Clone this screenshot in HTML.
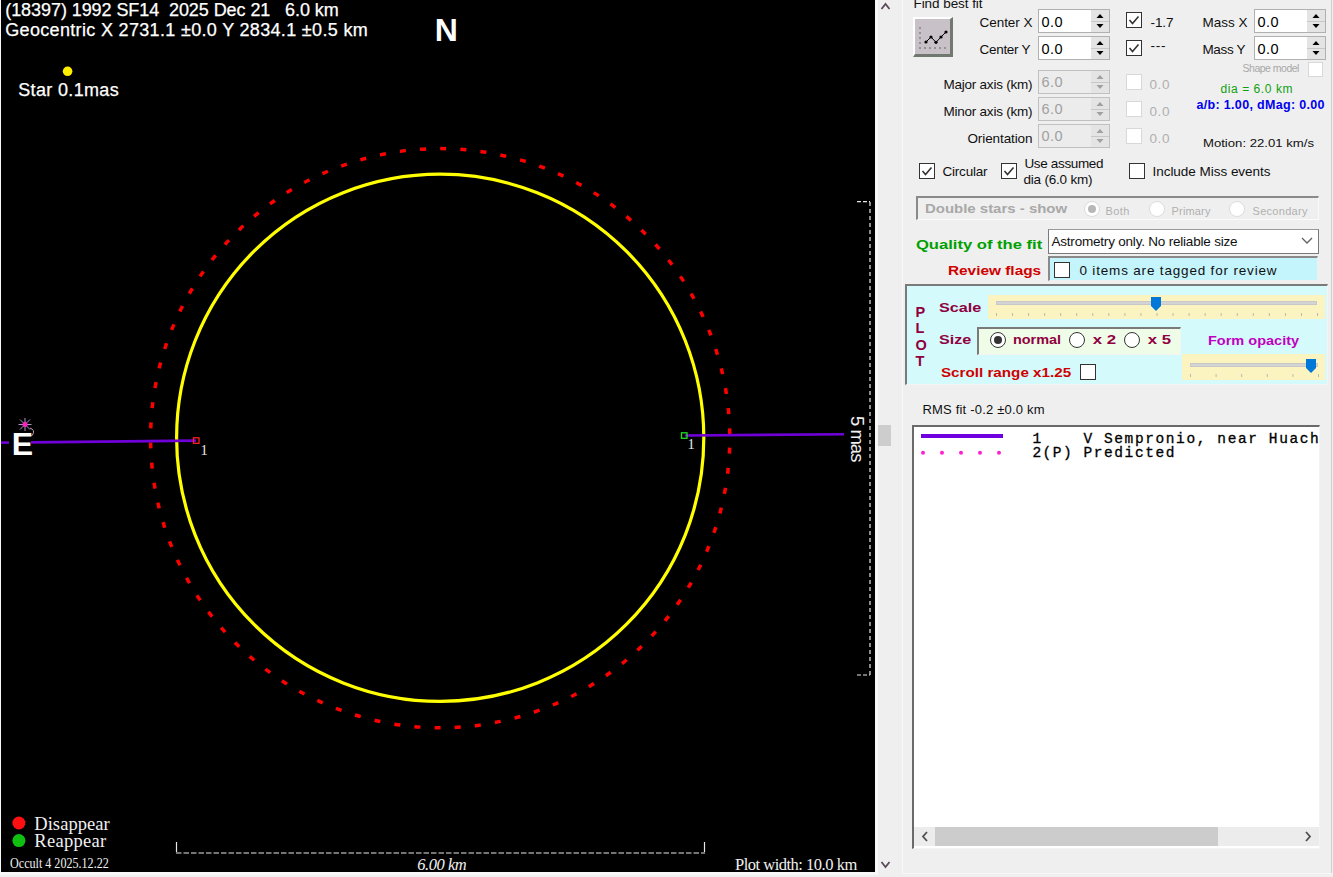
<!DOCTYPE html>
<html><head><meta charset="utf-8">
<style>
*{margin:0;padding:0;box-sizing:border-box}
html,body{width:1333px;height:877px;overflow:hidden;background:#efefef;font-family:"Liberation Sans",sans-serif;position:relative}
.a{position:absolute;white-space:pre}
.b{position:absolute}
.cb{position:absolute;width:16px;height:16px;background:#fff;border:1px solid #333}
.tb{position:absolute;background:#fff;border:1px solid #a8a8a8}
.sp{position:absolute;background:#e6e6e6;border:1px solid #c8c8c8}
</style></head><body>
<div class="b" style="left:0;top:0;width:878px;height:875px;background:#f8f8f8"></div>
<div class="b" style="left:1px;top:0;width:874px;height:872px;background:#000"></div>
<svg class="b" style="left:0;top:0" width="876" height="873">
  <circle cx="440.2" cy="438.2" r="289.6" fill="none" stroke="#ff0000" stroke-width="3.5" stroke-dasharray="6 14.218" stroke-dashoffset="-9.56"/>
  <circle cx="440.2" cy="437.8" r="263.6" fill="none" stroke="#ffff00" stroke-width="3.2"/>
  <line x1="1" y1="442.6" x2="9" y2="442.6" stroke="#7000d8" stroke-width="2.6"/>
  <line x1="31" y1="442.4" x2="196" y2="440.6" stroke="#7000d8" stroke-width="2.6"/>
  <rect x="193.5" y="437.8" width="5.5" height="5.5" fill="none" stroke="#ff2020" stroke-width="1.3"/>
  <line x1="685" y1="435.5" x2="844" y2="434.3" stroke="#7000d8" stroke-width="2.6"/>
  <rect x="681.5" y="432.8" width="5.5" height="5.5" fill="none" stroke="#20e020" stroke-width="1.3"/>
  <line x1="870" y1="202" x2="870" y2="675" stroke="#e8e8e8" stroke-width="1.2" stroke-dasharray="4 3"/>
  <line x1="857" y1="201.7" x2="870" y2="201.7" stroke="#e8e8e8" stroke-width="1.2" stroke-dasharray="4 2"/>
  <line x1="857" y1="675" x2="870" y2="675" stroke="#e8e8e8" stroke-width="1.2" stroke-dasharray="4 2"/>
  <line x1="176" y1="853" x2="705" y2="853" stroke="#e8e8e8" stroke-width="1.2" stroke-dasharray="5.5 2"/>
  <line x1="176.5" y1="842" x2="176.5" y2="852" stroke="#e8e8e8" stroke-width="1.2"/>
  <line x1="704.5" y1="842" x2="704.5" y2="852" stroke="#e8e8e8" stroke-width="1.2"/>
  <circle cx="67.6" cy="71.3" r="4.8" fill="#ffee00"/>
  <circle cx="18.9" cy="823" r="6.5" fill="#ff1010"/>
  <circle cx="18.9" cy="840.6" r="6.5" fill="#10c010"/>
  <g stroke="#b090d0" stroke-width="1">
    <line x1="20" y1="419.5" x2="30" y2="429.5"/><line x1="30" y1="419.5" x2="20" y2="429.5"/>
    <line x1="25" y1="418" x2="25" y2="431"/><line x1="18.5" y1="424.5" x2="31.5" y2="424.5"/>
  </g>
  <circle cx="25" cy="424.5" r="2.5" fill="#ff20c0"/>
  <path d="M30 428 q5 2 3 6 l-1.5 2" fill="none" stroke="#c0a0c0" stroke-width="1"/>
</svg>
<div class="a" style="left:867.5px;top:416.2px;font:18.5px/22.2px 'Liberation Sans',sans-serif;letter-spacing:-1px;color:#f0f0f0;transform-origin:0 0;transform:rotate(90deg)">5 mas</div>
<div class="b" style="left:878px;top:0;width:455px;height:877px;background:#efefef"></div>
<div class="b" style="left:902px;top:0;width:1px;height:873px;background:#f8f8f8"></div>
<div class="b" style="left:902px;top:873px;width:431px;height:1px;background:#f8f8f8"></div>
<svg class="b" style="left:878px;top:0" width="24" height="877"><path d="M3.5 9 L7.5 4 L11.5 9" fill="none" stroke="#5a4a5a" stroke-width="1.8"/><path d="M3.5 862 L7.5 867 L11.5 862" fill="none" stroke="#5a4a5a" stroke-width="1.8"/><rect x="0" y="425" width="13" height="21" fill="#cdcdcd"/></svg>
<div class="b" style="left:1331px;top:0px;width:1px;height:873px;background:#cdd2cd"></div>
<div class="b" style="left:913px;top:17px;width:40px;height:40px;background:#c8c2c8;border-top:2px solid #fff;border-left:2px solid #fff;border-right:3px solid #707870;border-bottom:3px solid #707870"></div>
<svg class="b" style="left:913px;top:17px" width="40" height="40">
<g fill="#555"><circle cx="7" cy="11" r="0.8"/><circle cx="7" cy="16" r="0.8"/><circle cx="7" cy="21" r="0.8"/><circle cx="7" cy="26" r="0.8"/><circle cx="7" cy="31" r="0.8"/>
<circle cx="12" cy="31" r="0.8"/><circle cx="17" cy="31" r="0.8"/><circle cx="22" cy="31" r="0.8"/><circle cx="27" cy="31" r="0.8"/><circle cx="32" cy="31" r="0.8"/></g>
<path d="M13 25 L18 20 L23 25.3 L28 20 L33 15" fill="none" stroke="#000" stroke-width="1"/>
<g fill="#000"><circle cx="13" cy="25" r="1.6"/><circle cx="18" cy="20" r="1.6"/><circle cx="23" cy="25.3" r="1.6"/><circle cx="28" cy="20" r="1.6"/><circle cx="33" cy="15" r="1.6"/></g>
</svg>
<div class="b" style="left:1038px;top:9px;width:72px;height:24px;background:#fff;border:1px solid #b0b0b0"></div><div class="b" style="left:1091px;top:10px;width:18px;height:22px;background:#e4e4e4"></div><div class="b" style="left:1091px;top:21px;width:18px;height:1px;background:#c8c8c8"></div><svg class="b" style="left:1091px;top:9px" width="18" height="24"><path d="M5.5 9.0 L9 5.0 L12.5 9.0 Z M5.5 15.0 L9 19.0 L12.5 15.0 Z" fill="#000"/></svg>
<div class="b" style="left:1038px;top:36px;width:72px;height:24px;background:#fff;border:1px solid #b0b0b0"></div><div class="b" style="left:1091px;top:37px;width:18px;height:22px;background:#e4e4e4"></div><div class="b" style="left:1091px;top:48px;width:18px;height:1px;background:#c8c8c8"></div><svg class="b" style="left:1091px;top:36px" width="18" height="24"><path d="M5.5 9.0 L9 5.0 L12.5 9.0 Z M5.5 15.0 L9 19.0 L12.5 15.0 Z" fill="#000"/></svg>
<div class="b" style="left:1254px;top:9px;width:72px;height:24px;background:#fff;border:1px solid #b0b0b0"></div><div class="b" style="left:1307px;top:10px;width:18px;height:22px;background:#e4e4e4"></div><div class="b" style="left:1307px;top:21px;width:18px;height:1px;background:#c8c8c8"></div><svg class="b" style="left:1307px;top:9px" width="18" height="24"><path d="M5.5 9.0 L9 5.0 L12.5 9.0 Z M5.5 15.0 L9 19.0 L12.5 15.0 Z" fill="#000"/></svg>
<div class="b" style="left:1254px;top:36px;width:72px;height:24px;background:#fff;border:1px solid #b0b0b0"></div><div class="b" style="left:1307px;top:37px;width:18px;height:22px;background:#e4e4e4"></div><div class="b" style="left:1307px;top:48px;width:18px;height:1px;background:#c8c8c8"></div><svg class="b" style="left:1307px;top:36px" width="18" height="24"><path d="M5.5 9.0 L9 5.0 L12.5 9.0 Z M5.5 15.0 L9 19.0 L12.5 15.0 Z" fill="#000"/></svg>
<div class="b" style="left:1038px;top:70px;width:72px;height:24px;background:#ececec;border:1px solid #c0c0c0"></div><div class="b" style="left:1091px;top:71px;width:18px;height:22px;background:#e4e4e4"></div><div class="b" style="left:1091px;top:82px;width:18px;height:1px;background:#c8c8c8"></div><svg class="b" style="left:1091px;top:70px" width="18" height="24"><path d="M5.5 9.0 L9 5.0 L12.5 9.0 Z M5.5 15.0 L9 19.0 L12.5 15.0 Z" fill="#a0a0a0"/></svg>
<div class="b" style="left:1038px;top:97px;width:72px;height:24px;background:#ececec;border:1px solid #c0c0c0"></div><div class="b" style="left:1091px;top:98px;width:18px;height:22px;background:#e4e4e4"></div><div class="b" style="left:1091px;top:109px;width:18px;height:1px;background:#c8c8c8"></div><svg class="b" style="left:1091px;top:97px" width="18" height="24"><path d="M5.5 9.0 L9 5.0 L12.5 9.0 Z M5.5 15.0 L9 19.0 L12.5 15.0 Z" fill="#a0a0a0"/></svg>
<div class="b" style="left:1038px;top:124px;width:72px;height:24px;background:#ececec;border:1px solid #c0c0c0"></div><div class="b" style="left:1091px;top:125px;width:18px;height:22px;background:#e4e4e4"></div><div class="b" style="left:1091px;top:136px;width:18px;height:1px;background:#c8c8c8"></div><svg class="b" style="left:1091px;top:124px" width="18" height="24"><path d="M5.5 9.0 L9 5.0 L12.5 9.0 Z M5.5 15.0 L9 19.0 L12.5 15.0 Z" fill="#a0a0a0"/></svg>
<div class="b" style="left:1126px;top:12px;width:16px;height:16px;background:#fff;border:1px solid #333"><svg class="b" style="left:0;top:0" width="14" height="14"><path d="M2.5 7 L5.5 10.5 L11.5 3.5" fill="none" stroke="#333" stroke-width="1.6"/></svg></div>
<div class="b" style="left:1126px;top:40px;width:16px;height:16px;background:#fff;border:1px solid #333"><svg class="b" style="left:0;top:0" width="14" height="14"><path d="M2.5 7 L5.5 10.5 L11.5 3.5" fill="none" stroke="#333" stroke-width="1.6"/></svg></div>
<div class="b" style="left:1126px;top:74px;width:16px;height:16px;background:#fff;border:1px solid #d8d8d8"></div>
<div class="b" style="left:1126px;top:101px;width:16px;height:16px;background:#fff;border:1px solid #d8d8d8"></div>
<div class="b" style="left:1126px;top:128px;width:16px;height:16px;background:#fff;border:1px solid #d8d8d8"></div>
<div class="b" style="left:1308px;top:62px;width:15px;height:15px;background:#fff;border:1px solid #d8d8d8"></div>
<div class="b" style="left:919px;top:163px;width:16px;height:16px;background:#fff;border:1px solid #333"><svg class="b" style="left:0;top:0" width="14" height="14"><path d="M2.5 7 L5.5 10.5 L11.5 3.5" fill="none" stroke="#333" stroke-width="1.6"/></svg></div>
<div class="b" style="left:1001px;top:163px;width:16px;height:16px;background:#fff;border:1px solid #333"><svg class="b" style="left:0;top:0" width="14" height="14"><path d="M2.5 7 L5.5 10.5 L11.5 3.5" fill="none" stroke="#333" stroke-width="1.6"/></svg></div>
<div class="b" style="left:1129px;top:163px;width:16px;height:16px;background:#fff;border:1px solid #333"></div>
<div class="b" style="left:916px;top:196px;width:403px;height:24px;border-top:2px solid #8a8a8a;border-left:2px solid #8a8a8a;border-right:1px solid #fafafa;border-bottom:1px solid #fafafa"></div>
<div class="b" style="left:1084px;top:201px;width:16px;height:16px;border-radius:50%;background:#fff;border:1px solid #dcdcdc"><div class="b" style="left:3.0px;top:3.0px;width:8px;height:8px;border-radius:50%;background:#b8b8b8"></div></div>
<div class="b" style="left:1149px;top:201px;width:16px;height:16px;border-radius:50%;background:#fff;border:1px solid #dcdcdc"></div>
<div class="b" style="left:1229px;top:201px;width:16px;height:16px;border-radius:50%;background:#fff;border:1px solid #dcdcdc"></div>
<div class="b" style="left:1048px;top:229px;width:271px;height:25px;background:#fff;border:1px solid #7a7a7a;border-top-color:#9a9a9a"></div>
<svg class="b" style="left:1300px;top:235px" width="16" height="12"><path d="M2 3 L7 8 L12 3" fill="none" stroke="#606060" stroke-width="1.3"/></svg>
<div class="b" style="left:1048px;top:256px;width:270px;height:25px;background:#c4f4fc;border-top:2px solid #8a8a8a;border-left:2px solid #8a8a8a;border-right:1px solid #f0f0f0;border-bottom:1px solid #f0f0f0"></div>
<div class="b" style="left:1054px;top:262px;width:16px;height:16px;background:#fff;border:1px solid #333"></div>
<div class="b" style="left:905px;top:284px;width:423px;height:101px;background:#d4fafc;border-top:2px solid #7a7a7a;border-left:2px solid #7a7a7a;border-right:1px solid #f4f4f4;border-bottom:1px solid #f4f4f4"></div>
<div class="b" style="left:1080px;top:364px;width:16px;height:16px;background:#fff;border:1px solid #333"></div>
<div class="b" style="left:988px;top:295px;width:337px;height:24px;background:#fcf4c0"></div><div class="b" style="left:996px;top:301px;width:321px;height:4px;background:#d4d4d4;border:1px solid #c8c8c8"></div><svg class="b" style="left:988px;top:295px" width="337" height="24"><line x1="8.5" y1="18" x2="8.5" y2="21" stroke="#b8b8b8" stroke-width="1"/><line x1="24.549999999999955" y1="18" x2="24.549999999999955" y2="21" stroke="#b8b8b8" stroke-width="1"/><line x1="40.59999999999991" y1="18" x2="40.59999999999991" y2="21" stroke="#b8b8b8" stroke-width="1"/><line x1="56.65000000000009" y1="18" x2="56.65000000000009" y2="21" stroke="#b8b8b8" stroke-width="1"/><line x1="72.70000000000005" y1="18" x2="72.70000000000005" y2="21" stroke="#b8b8b8" stroke-width="1"/><line x1="88.75" y1="18" x2="88.75" y2="21" stroke="#b8b8b8" stroke-width="1"/><line x1="104.79999999999995" y1="18" x2="104.79999999999995" y2="21" stroke="#b8b8b8" stroke-width="1"/><line x1="120.84999999999991" y1="18" x2="120.84999999999991" y2="21" stroke="#b8b8b8" stroke-width="1"/><line x1="136.9000000000001" y1="18" x2="136.9000000000001" y2="21" stroke="#b8b8b8" stroke-width="1"/><line x1="152.95000000000005" y1="18" x2="152.95000000000005" y2="21" stroke="#b8b8b8" stroke-width="1"/><line x1="169.0" y1="18" x2="169.0" y2="21" stroke="#b8b8b8" stroke-width="1"/><line x1="185.04999999999995" y1="18" x2="185.04999999999995" y2="21" stroke="#b8b8b8" stroke-width="1"/><line x1="201.0999999999999" y1="18" x2="201.0999999999999" y2="21" stroke="#b8b8b8" stroke-width="1"/><line x1="217.1500000000001" y1="18" x2="217.1500000000001" y2="21" stroke="#b8b8b8" stroke-width="1"/><line x1="233.20000000000005" y1="18" x2="233.20000000000005" y2="21" stroke="#b8b8b8" stroke-width="1"/><line x1="249.25" y1="18" x2="249.25" y2="21" stroke="#b8b8b8" stroke-width="1"/><line x1="265.29999999999995" y1="18" x2="265.29999999999995" y2="21" stroke="#b8b8b8" stroke-width="1"/><line x1="281.3499999999999" y1="18" x2="281.3499999999999" y2="21" stroke="#b8b8b8" stroke-width="1"/><line x1="297.4000000000001" y1="18" x2="297.4000000000001" y2="21" stroke="#b8b8b8" stroke-width="1"/><line x1="313.45000000000005" y1="18" x2="313.45000000000005" y2="21" stroke="#b8b8b8" stroke-width="1"/><line x1="329.5" y1="18" x2="329.5" y2="21" stroke="#b8b8b8" stroke-width="1"/><path d="M163 2 h10 v9 l-5 5 l-5 -5 z" fill="#0078d7"/></svg>
<div class="b" style="left:1182px;top:354px;width:143px;height:26px;background:#fcf4c0"></div><div class="b" style="left:1190px;top:363px;width:128px;height:4px;background:#d4d4d4;border:1px solid #c8c8c8"></div><svg class="b" style="left:1182px;top:354px" width="143" height="26"><line x1="8.5" y1="20" x2="8.5" y2="23" stroke="#b8b8b8" stroke-width="1"/><line x1="34.09999999999991" y1="20" x2="34.09999999999991" y2="23" stroke="#b8b8b8" stroke-width="1"/><line x1="59.700000000000045" y1="20" x2="59.700000000000045" y2="23" stroke="#b8b8b8" stroke-width="1"/><line x1="85.29999999999995" y1="20" x2="85.29999999999995" y2="23" stroke="#b8b8b8" stroke-width="1"/><line x1="110.90000000000009" y1="20" x2="110.90000000000009" y2="23" stroke="#b8b8b8" stroke-width="1"/><line x1="136.5" y1="20" x2="136.5" y2="23" stroke="#b8b8b8" stroke-width="1"/><path d="M124 5 h10 v9 l-5 5 l-5 -5 z" fill="#0078d7"/></svg>
<div class="b" style="left:977px;top:327px;width:204px;height:28px;background:#eefce8;border-top:2px solid #7a7a7a;border-left:2px solid #7a7a7a;border-right:1px solid #f4f4f4;border-bottom:1px solid #f4f4f4"></div>
<div class="b" style="left:990px;top:332px;width:16px;height:16px;border-radius:50%;background:#fff;border:1px solid #333"><div class="b" style="left:3.0px;top:3.0px;width:8px;height:8px;border-radius:50%;background:#333"></div></div>
<div class="b" style="left:1069px;top:332px;width:16px;height:16px;border-radius:50%;background:#fff;border:1px solid #333"></div>
<div class="b" style="left:1124px;top:332px;width:16px;height:16px;border-radius:50%;background:#fff;border:1px solid #333"></div>
<div class="b" style="left:912px;top:425px;width:408px;height:424px;background:#fff;border-top:2px solid #6a6a6a;border-left:2px solid #6a6a6a;border-right:1px solid #f4f4f4;border-bottom:1px solid #f4f4f4"></div>
<div class="b" style="left:914px;top:827px;width:405px;height:19px;background:#ececec"></div>
<div class="b" style="left:935px;top:827px;width:283px;height:19px;background:#cccccc"></div>
<svg class="b" style="left:914px;top:827px" width="405" height="19"><path d="M13 5 L9 9.5 L13 14" fill="none" stroke="#505050" stroke-width="1.8"/><path d="M392 5 L396 9.5 L392 14" fill="none" stroke="#505050" stroke-width="1.8"/></svg>
<div class="b" style="left:921px;top:434px;width:82px;height:4px;background:#7000e0"></div>
<svg class="b" style="left:914px;top:445px" width="100" height="15"><circle cx="9" cy="7.8" r="2" fill="#ff20d0"/><circle cx="28" cy="7.8" r="2" fill="#ff20d0"/><circle cx="47" cy="7.8" r="2" fill="#ff20d0"/><circle cx="66" cy="7.8" r="2" fill="#ff20d0"/><circle cx="85" cy="7.8" r="2" fill="#ff20d0"/></svg>
<div class="a" style="left:5.28px;top:0.00px;line-height:21.6px;font-family:'Liberation Sans';font-size:18px;font-weight:normal;font-style:normal;letter-spacing:-0.073px;color:#ffffff;-webkit-text-stroke:0.25px #fff">(18397)&#32;1992&#32;SF14&#32;&#32;2025&#32;Dec&#32;21&#32;&#32;&#32;6.0&#32;km</div>
<div class="a" style="left:5.28px;top:20.00px;line-height:21.6px;font-family:'Liberation Sans';font-size:18px;font-weight:normal;font-style:normal;letter-spacing:0.328px;color:#ffffff;-webkit-text-stroke:0.25px #fff">Geocentric&#32;X&#32;2731.1&#32;±0.0&#32;Y&#32;2834.1&#32;±0.5&#32;km</div>
<div class="a" style="left:18.28px;top:80.30px;line-height:21.6px;font-family:'Liberation Sans';font-size:18px;font-weight:normal;font-style:normal;letter-spacing:0.339px;color:#ffffff;-webkit-text-stroke:0.25px #fff">Star&#32;0.1mas</div>
<div class="a" style="left:434.72px;top:11.20px;line-height:38.4px;font-family:'Liberation Sans';font-size:32px;font-weight:bold;font-style:normal;letter-spacing:0px;color:#ffffff;">N</div>
<div class="a" style="left:11.72px;top:425.00px;line-height:38.4px;font-family:'Liberation Sans';font-size:32px;font-weight:bold;font-style:normal;letter-spacing:0px;color:#ffffff;">E</div>
<div class="a" style="left:200.42px;top:441.70px;line-height:17.4px;font-family:'Liberation Serif';font-size:14.5px;font-weight:normal;font-style:normal;letter-spacing:0.91px;color:#e8e8e8;">1</div>
<div class="a" style="left:687.42px;top:436.20px;line-height:17.4px;font-family:'Liberation Serif';font-size:14.5px;font-weight:normal;font-style:normal;letter-spacing:0.91px;color:#e8e8e8;">1</div>
<div class="a" style="left:34.26px;top:812.80px;line-height:22.2px;font-family:'Liberation Serif';font-size:18.5px;font-weight:normal;font-style:normal;letter-spacing:0.06px;color:#f0f0f0;">Disappear</div>
<div class="a" style="left:34.26px;top:830.30px;line-height:22.2px;font-family:'Liberation Serif';font-size:18.5px;font-weight:normal;font-style:normal;letter-spacing:0.303px;color:#f0f0f0;">Reappear</div>
<div class="a" style="left:10.44px;top:855.60px;line-height:16.8px;font-family:'Liberation Serif';font-size:14px;font-weight:normal;font-style:normal;letter-spacing:0px;color:#f0f0f0;;transform-origin:0.56px 0;transform:scaleX(0.863)">Occult&#32;4&#32;2025.12.22</div>
<div class="a" style="left:417.34px;top:854.80px;line-height:19.8px;font-family:'Liberation Serif';font-size:16.5px;font-weight:normal;font-style:italic;letter-spacing:-0.488px;color:#f0f0f0;">6.00&#32;km</div>
<div class="a" style="left:734.94px;top:854.80px;line-height:19.8px;font-family:'Liberation Serif';font-size:16.5px;font-weight:normal;font-style:normal;letter-spacing:-0.488px;color:#f0f0f0;">Plot&#32;width:&#32;10.0&#32;km</div>
<div class="a" style="left:913.46px;top:-3.76px;line-height:16.2px;font-family:'Liberation Sans';font-size:13.5px;font-weight:normal;font-style:normal;letter-spacing:-0.058px;color:#101010;">Find&#32;best&#32;fit</div>
<div class="a" style="left:979.46px;top:14.64px;line-height:16.2px;font-family:'Liberation Sans';font-size:13.5px;font-weight:normal;font-style:normal;letter-spacing:-0.029px;color:#101010;">Center&#32;X</div>
<div class="a" style="left:979.46px;top:41.64px;line-height:16.2px;font-family:'Liberation Sans';font-size:13.5px;font-weight:normal;font-style:normal;letter-spacing:-0.279px;color:#101010;">Center&#32;Y</div>
<div class="a" style="left:1041.42px;top:13.64px;line-height:17.4px;font-family:'Liberation Sans';font-size:14.5px;font-weight:normal;font-style:normal;letter-spacing:0.494px;color:#000;">0.0</div>
<div class="a" style="left:1041.42px;top:40.64px;line-height:17.4px;font-family:'Liberation Sans';font-size:14.5px;font-weight:normal;font-style:normal;letter-spacing:0.494px;color:#000;">0.0</div>
<div class="a" style="left:1257.42px;top:13.64px;line-height:17.4px;font-family:'Liberation Sans';font-size:14.5px;font-weight:normal;font-style:normal;letter-spacing:0.494px;color:#000;">0.0</div>
<div class="a" style="left:1257.42px;top:40.64px;line-height:17.4px;font-family:'Liberation Sans';font-size:14.5px;font-weight:normal;font-style:normal;letter-spacing:0.494px;color:#000;">0.0</div>
<div class="a" style="left:1150.46px;top:14.64px;line-height:16.2px;font-family:'Liberation Sans';font-size:13.5px;font-weight:normal;font-style:normal;letter-spacing:-0.062px;color:#101010;">-1.7</div>
<div class="a" style="left:1150.46px;top:38.24px;line-height:16.2px;font-family:'Liberation Sans';font-size:13.5px;font-weight:normal;font-style:normal;letter-spacing:0.79px;color:#101010;">---</div>
<div class="a" style="left:1202.46px;top:15.24px;line-height:16.2px;font-family:'Liberation Sans';font-size:13.5px;font-weight:normal;font-style:normal;letter-spacing:0.013px;color:#101010;">Mass&#32;X</div>
<div class="a" style="left:1202.46px;top:42.24px;line-height:16.2px;font-family:'Liberation Sans';font-size:13.5px;font-weight:normal;font-style:normal;letter-spacing:-0.337px;color:#101010;">Mass&#32;Y</div>
<div class="a" style="left:1242.58px;top:62.27px;line-height:12.6px;font-family:'Liberation Sans';font-size:10.5px;font-weight:normal;font-style:normal;letter-spacing:-0.505px;color:#a8a8a8;">Shape&#32;model</div>
<div class="a" style="left:943.46px;top:76.74px;line-height:16.2px;font-family:'Liberation Sans';font-size:13.5px;font-weight:normal;font-style:normal;letter-spacing:-0.228px;color:#101010;">Major&#32;axis&#32;(km)</div>
<div class="a" style="left:943.46px;top:103.74px;line-height:16.2px;font-family:'Liberation Sans';font-size:13.5px;font-weight:normal;font-style:normal;letter-spacing:-0.228px;color:#101010;">Minor&#32;axis&#32;(km)</div>
<div class="a" style="left:967.46px;top:130.74px;line-height:16.2px;font-family:'Liberation Sans';font-size:13.5px;font-weight:normal;font-style:normal;letter-spacing:-0.097px;color:#101010;">Orientation</div>
<div class="a" style="left:1041.42px;top:74.14px;line-height:17.4px;font-family:'Liberation Sans';font-size:14.5px;font-weight:normal;font-style:normal;letter-spacing:0.494px;color:#a0a0a0;">6.0</div>
<div class="a" style="left:1041.42px;top:101.14px;line-height:17.4px;font-family:'Liberation Sans';font-size:14.5px;font-weight:normal;font-style:normal;letter-spacing:0.494px;color:#a0a0a0;">6.0</div>
<div class="a" style="left:1041.42px;top:128.14px;line-height:17.4px;font-family:'Liberation Sans';font-size:14.5px;font-weight:normal;font-style:normal;letter-spacing:0.494px;color:#a0a0a0;">0.0</div>
<div class="a" style="left:1149.46px;top:76.74px;line-height:16.2px;font-family:'Liberation Sans';font-size:13.5px;font-weight:normal;font-style:normal;letter-spacing:0.649px;color:#b0b0b0;">0.0</div>
<div class="a" style="left:1149.46px;top:103.74px;line-height:16.2px;font-family:'Liberation Sans';font-size:13.5px;font-weight:normal;font-style:normal;letter-spacing:0.649px;color:#b0b0b0;">0.0</div>
<div class="a" style="left:1149.46px;top:130.74px;line-height:16.2px;font-family:'Liberation Sans';font-size:13.5px;font-weight:normal;font-style:normal;letter-spacing:0.649px;color:#b0b0b0;">0.0</div>
<div class="a" style="left:1220.52px;top:81.51px;line-height:14.4px;font-family:'Liberation Sans';font-size:12px;font-weight:normal;font-style:normal;letter-spacing:0.569px;color:#10a010;">dia&#32;=&#32;6.0&#32;km</div>
<div class="a" style="left:1196.50px;top:98.30px;line-height:15.0px;font-family:'Liberation Sans';font-size:12.5px;font-weight:bold;font-style:normal;letter-spacing:0.321px;color:#0000f0;">a/b:&#32;1.00,&#32;dMag:&#32;0.00</div>
<div class="a" style="left:1202.53px;top:136.02px;line-height:14.16px;font-family:'Liberation Sans';font-size:11.8px;font-weight:normal;font-style:normal;letter-spacing:0px;color:#101010;;transform-origin:0.47px 0;transform:scaleX(1.1142)">Motion:&#32;22.01&#32;km/s</div>
<div class="a" style="left:942.46px;top:164.24px;line-height:16.2px;font-family:'Liberation Sans';font-size:13.5px;font-weight:normal;font-style:normal;letter-spacing:-0.205px;color:#101010;">Circular</div>
<div class="a" style="left:1024.46px;top:155.54px;line-height:16.2px;font-family:'Liberation Sans';font-size:13.5px;font-weight:normal;font-style:normal;letter-spacing:-0.347px;color:#101010;">Use&#32;assumed</div>
<div class="a" style="left:1023.46px;top:171.74px;line-height:16.2px;font-family:'Liberation Sans';font-size:13.5px;font-weight:normal;font-style:normal;letter-spacing:-0.2px;color:#101010;">dia&#32;(6.0&#32;km)</div>
<div class="a" style="left:1152.46px;top:163.84px;line-height:16.2px;font-family:'Liberation Sans';font-size:13.5px;font-weight:normal;font-style:normal;letter-spacing:-0.027px;color:#101010;">Include&#32;Miss&#32;events</div>
<div class="a" style="left:925.46px;top:201.08px;line-height:16.2px;font-family:'Liberation Sans';font-size:13.5px;font-weight:bold;font-style:normal;letter-spacing:0px;color:#a8a8a8;;transform-origin:0.54px 0;transform:scaleX(1.1085)">Double&#32;stars&#32;-&#32;show</div>
<div class="a" style="left:1105.56px;top:205.25px;line-height:13.2px;font-family:'Liberation Sans';font-size:11px;font-weight:normal;font-style:normal;letter-spacing:0.413px;color:#b0b0b0;">Both</div>
<div class="a" style="left:1171.56px;top:205.25px;line-height:13.2px;font-family:'Liberation Sans';font-size:11px;font-weight:normal;font-style:normal;letter-spacing:0.165px;color:#b0b0b0;">Primary</div>
<div class="a" style="left:1252.56px;top:205.25px;line-height:13.2px;font-family:'Liberation Sans';font-size:11px;font-weight:normal;font-style:normal;letter-spacing:0.286px;color:#b0b0b0;">Secondary</div>
<div class="a" style="left:916.46px;top:237.08px;line-height:16.2px;font-family:'Liberation Sans';font-size:13.5px;font-weight:bold;font-style:normal;letter-spacing:0px;color:#00a000;;transform-origin:0.54px 0;transform:scaleX(1.2295)">Quality&#32;of&#32;the&#32;fit</div>
<div class="a" style="left:948.46px;top:263.08px;line-height:16.2px;font-family:'Liberation Sans';font-size:13.5px;font-weight:bold;font-style:normal;letter-spacing:0px;color:#d00000;;transform-origin:0.54px 0;transform:scaleX(1.1398)">Review&#32;flags</div>
<div class="a" style="left:1051.46px;top:234.24px;line-height:16.2px;font-family:'Liberation Sans';font-size:13.5px;font-weight:normal;font-style:normal;letter-spacing:-0.203px;color:#101010;">Astrometry&#32;only.&#32;No&#32;reliable&#32;size</div>
<div class="a" style="left:1079.46px;top:262.84px;line-height:16.2px;font-family:'Liberation Sans';font-size:13.5px;font-weight:normal;font-style:normal;letter-spacing:0.821px;color:#101010;">0&#32;items&#32;are&#32;tagged&#32;for&#32;review</div>
<div class="a" style="left:915.42px;top:303.60px;line-height:17.4px;font-family:'Liberation Sans';font-size:14.5px;font-weight:bold;font-style:normal;letter-spacing:0px;color:#900040;">P</div>
<div class="a" style="left:915.42px;top:320.00px;line-height:17.4px;font-family:'Liberation Sans';font-size:14.5px;font-weight:bold;font-style:normal;letter-spacing:0px;color:#900040;">L</div>
<div class="a" style="left:915.42px;top:336.60px;line-height:17.4px;font-family:'Liberation Sans';font-size:14.5px;font-weight:bold;font-style:normal;letter-spacing:0px;color:#900040;">O</div>
<div class="a" style="left:915.42px;top:353.00px;line-height:17.4px;font-family:'Liberation Sans';font-size:14.5px;font-weight:bold;font-style:normal;letter-spacing:0px;color:#900040;">T</div>
<div class="a" style="left:939.46px;top:299.78px;line-height:16.2px;font-family:'Liberation Sans';font-size:13.5px;font-weight:bold;font-style:normal;letter-spacing:0px;color:#900040;;transform-origin:0.54px 0;transform:scaleX(1.1988)">Scale</div>
<div class="a" style="left:939.46px;top:332.48px;line-height:16.2px;font-family:'Liberation Sans';font-size:13.5px;font-weight:bold;font-style:normal;letter-spacing:0px;color:#900040;;transform-origin:0.54px 0;transform:scaleX(1.1953)">Size</div>
<div class="a" style="left:941.46px;top:364.58px;line-height:16.2px;font-family:'Liberation Sans';font-size:13.5px;font-weight:bold;font-style:normal;letter-spacing:0px;color:#d00000;;transform-origin:0.54px 0;transform:scaleX(1.1268)">Scroll&#32;range&#32;x1.25</div>
<div class="a" style="left:1208.46px;top:333.08px;line-height:16.2px;font-family:'Liberation Sans';font-size:13.5px;font-weight:bold;font-style:normal;letter-spacing:0px;color:#c000c0;;transform-origin:0.54px 0;transform:scaleX(1.0755)">Form&#32;opacity</div>
<div class="a" style="left:1013.46px;top:332.48px;line-height:16.2px;font-family:'Liberation Sans';font-size:13.5px;font-weight:bold;font-style:normal;letter-spacing:0px;color:#900040;;transform-origin:0.54px 0;transform:scaleX(1.0697)">normal</div>
<div class="a" style="left:1093.46px;top:332.48px;line-height:16.2px;font-family:'Liberation Sans';font-size:13.5px;font-weight:bold;font-style:normal;letter-spacing:0px;color:#900040;;transform-origin:0.54px 0;transform:scaleX(1.2429)">x&#32;2</div>
<div class="a" style="left:1148.46px;top:332.48px;line-height:16.2px;font-family:'Liberation Sans';font-size:13.5px;font-weight:bold;font-style:normal;letter-spacing:0px;color:#900040;;transform-origin:0.54px 0;transform:scaleX(1.2429)">x&#32;5</div>
<div class="a" style="left:922.48px;top:402.22px;line-height:15.6px;font-family:'Liberation Sans';font-size:13px;font-weight:normal;font-style:normal;letter-spacing:0.192px;color:#101010;">RMS&#32;fit&#32;-0.2&#32;±0.0&#32;km</div>
<div class="a" style="left:1032.42px;top:430.54px;line-height:17.4px;font-family:'Liberation Mono';font-size:14.5px;font-weight:normal;font-style:normal;letter-spacing:1.5px;color:#000;-webkit-text-stroke:0.3px #000">1</div>
<div class="a" style="left:1083.42px;top:430.54px;line-height:17.4px;font-family:'Liberation Mono';font-size:14.5px;font-weight:normal;font-style:normal;letter-spacing:1.6px;color:#000;-webkit-text-stroke:0.3px #000">V&#32;Sempronio,&#32;near&#32;Huach</div>
<div class="a" style="left:1032.42px;top:445.44px;line-height:17.4px;font-family:'Liberation Mono';font-size:14.5px;font-weight:normal;font-style:normal;letter-spacing:1.5px;color:#000;-webkit-text-stroke:0.3px #000">2(P)</div>
<div class="a" style="left:1083.42px;top:445.44px;line-height:17.4px;font-family:'Liberation Mono';font-size:14.5px;font-weight:normal;font-style:normal;letter-spacing:1.6px;color:#000;-webkit-text-stroke:0.3px #000">Predicted</div>
</body></html>
